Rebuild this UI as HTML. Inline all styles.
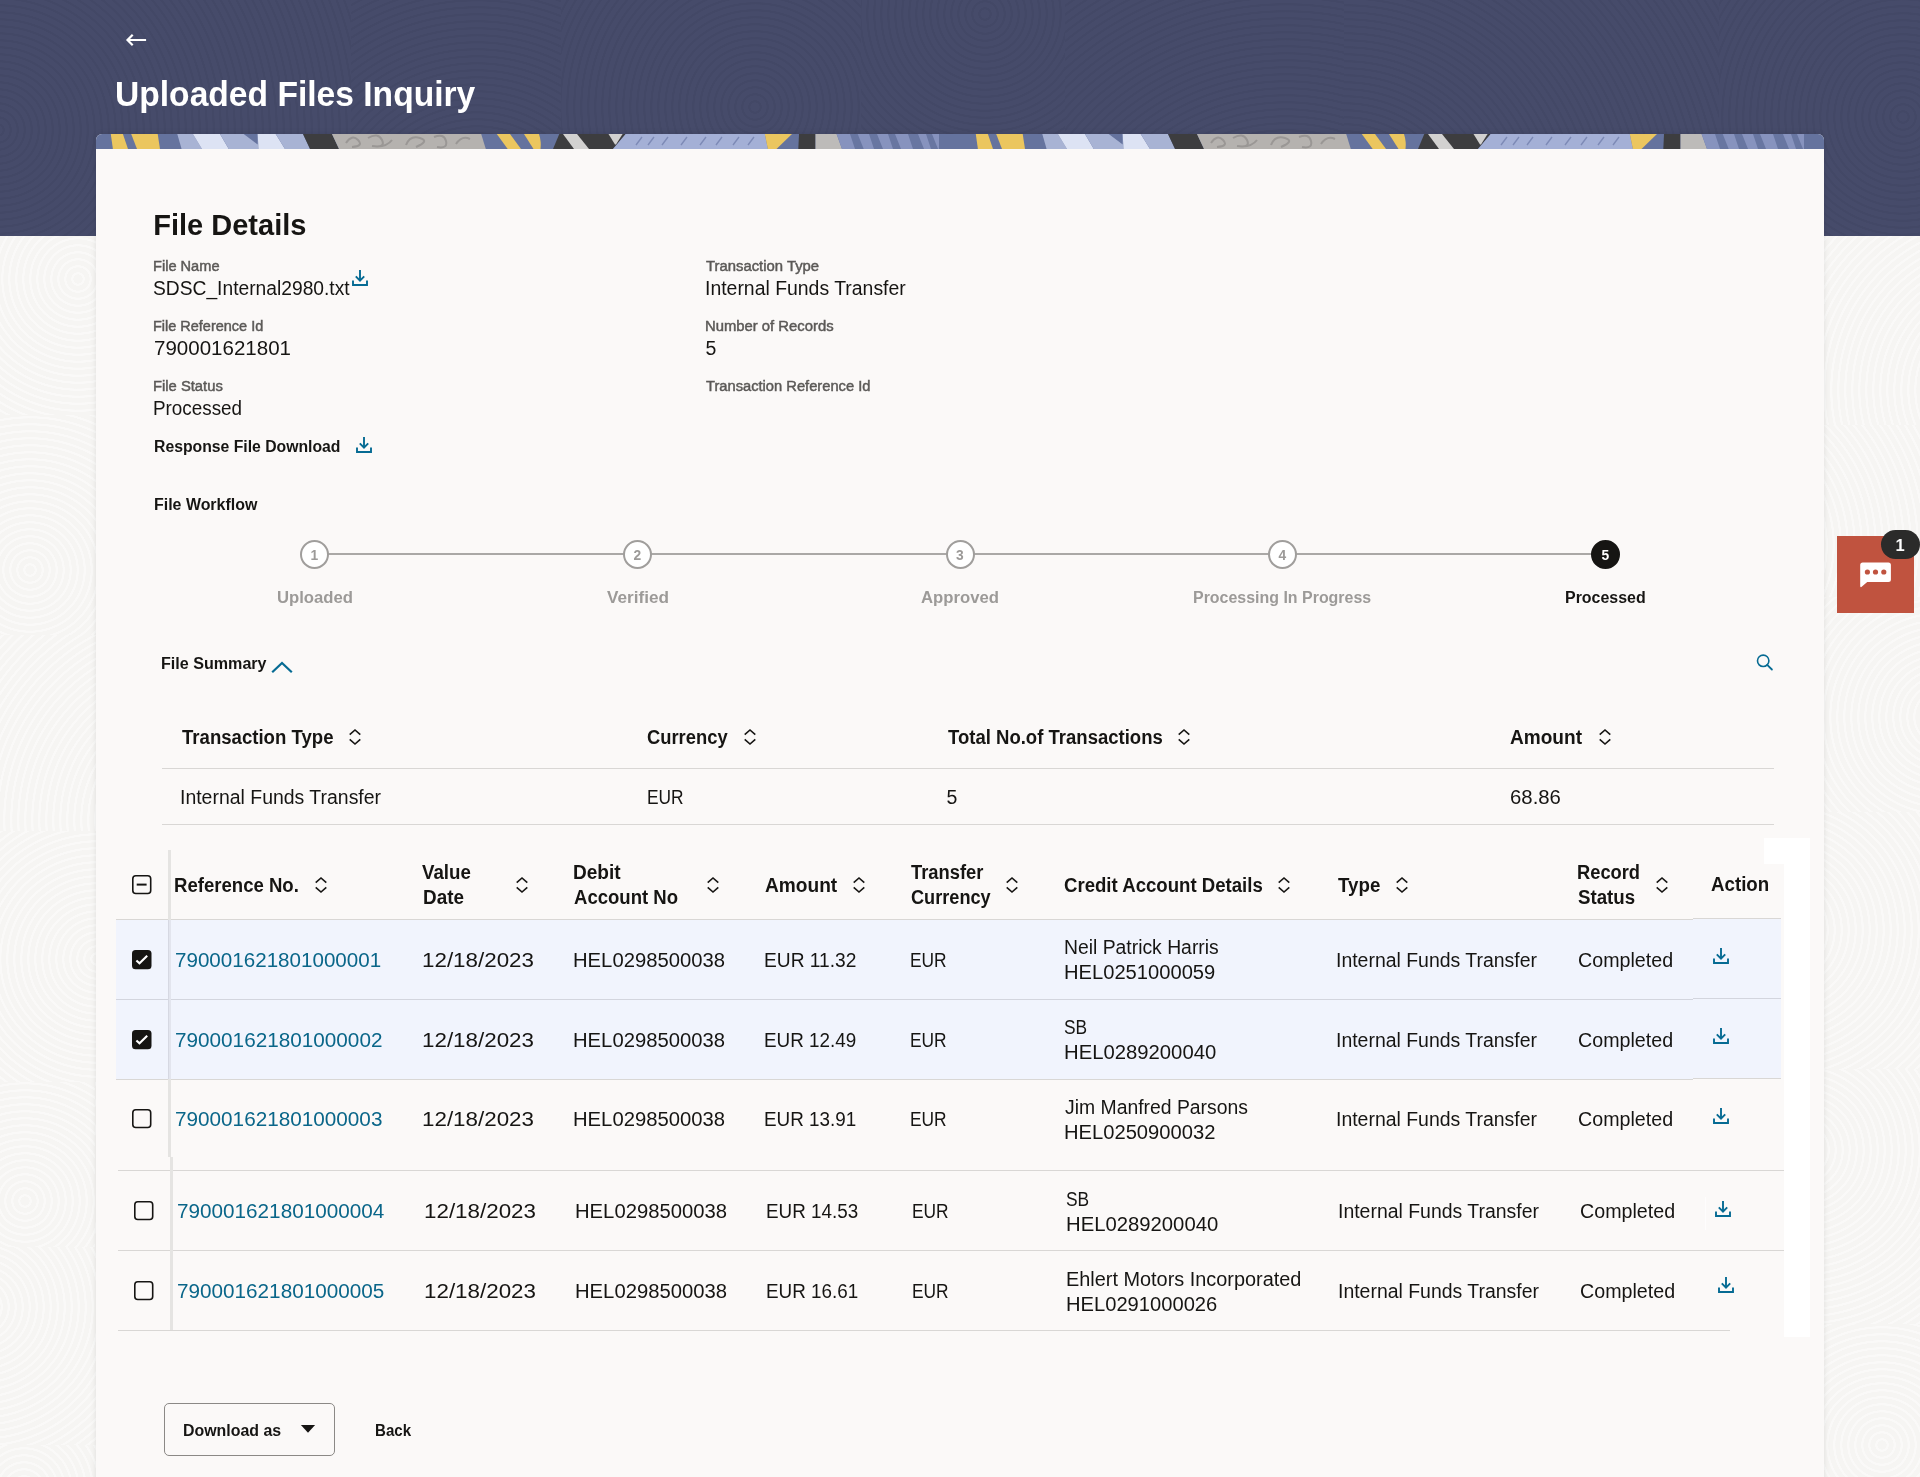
<!DOCTYPE html>
<html lang="en">
<head>
<meta charset="utf-8">
<title>Uploaded Files Inquiry</title>
<style>
*{box-sizing:border-box}
html,body{margin:0;padding:0}
body{width:1920px;height:1477px;overflow:hidden;position:relative;background:#f6f5f3;
  font-family:"Liberation Sans",sans-serif;color:#161513;}
.hdr{position:absolute;left:0;top:0;width:1920px;height:236px;background:#464b6a;overflow:hidden}
.card{position:absolute;left:96px;top:134px;width:1728px;height:1400px;background:#fbf9f8;
  border-radius:6px 6px 0 0;box-shadow:0 0 6px rgba(0,0,0,.10);overflow:hidden}
.banner{position:absolute;left:0;top:0;display:block}
.t{position:absolute;white-space:pre;margin:0;transform-origin:0 0}
#page{position:absolute;left:0;top:0;width:1920px;height:1477px;overflow:hidden;will-change:transform}
.ic{position:absolute;overflow:visible}
.ln{position:absolute;background:#d9d7d5;height:1px}
.abs{position:absolute}
.tx{position:absolute;display:block}
.cb{position:absolute;width:19px;height:19px;border:1.8px solid #161513;border-radius:3.5px}
.cb.on{background:#161513}
.cb.on svg{position:absolute;left:-1.8px;top:-1.8px}
.cb .minus{position:absolute;left:2.9px;top:6.7px;width:9.8px;height:2px;background:#161513}
.step{position:absolute;width:29px;height:29px;border-radius:50%;border:2px solid #a09e9c;background:#fff}
.step.cur{background:#161513;border-color:#161513}
.btn{position:absolute;left:164px;top:1403px;width:171px;height:53px;border:1px solid #8b8986;border-radius:5px}
</style>
</head>
<body>
<div id="page">
<svg width="0" height="0" style="position:absolute">
 <defs>
  <g id="dl" fill="none" stroke="#066b93" stroke-width="1.9">
    <path d="M1 10.4 V15 H15 V10.4"/><path d="M8 0 V10.6"/><path d="M3.8 6.3 L8 10.6 L12.2 6.3"/>
  </g>
  <g id="srt" fill="none" stroke="#161513" stroke-width="1.6">
    <path d="M-5.3 -2.3 L0 -7 L5.3 -2.3"/><path d="M-5.3 2.3 L0 7 L5.3 2.3"/>
  </g>
 </defs>
</svg>

<div class="abs" style="left:0;top:236px;width:96px;height:1241px;overflow:hidden"><i class="tx" style="left:-14px;top:0px;width:177px;height:179px;background:repeating-radial-gradient(circle at 92px 43px,transparent 0 4.4px,rgba(255,255,255,.45) 4.8px 6.6px,transparent 7px)"></i><i class="tx" style="left:-78px;top:179px;width:311px;height:220px;background:repeating-radial-gradient(circle at 108px 155px,transparent 0 4.4px,rgba(255,255,255,.45) 4.8px 6.6px,transparent 7px)"></i><i class="tx" style="left:-9px;top:399px;width:266px;height:196px;background:repeating-radial-gradient(circle at 201px 185px,transparent 0 4.4px,rgba(255,255,255,.45) 4.8px 6.6px,transparent 7px)"></i><i class="tx" style="left:-130px;top:595px;width:295px;height:251px;background:repeating-radial-gradient(circle at 227px 128px,transparent 0 4.4px,rgba(255,255,255,.45) 4.8px 6.6px,transparent 7px)"></i><i class="tx" style="left:-68px;top:846px;width:163px;height:165px;background:repeating-radial-gradient(circle at 93px 119px,transparent 0 4.4px,rgba(255,255,255,.45) 4.8px 6.6px,transparent 7px)"></i><i class="tx" style="left:95px;top:846px;width:237px;height:165px;background:repeating-radial-gradient(circle at 232px 97px,transparent 0 4.4px,rgba(255,255,255,.45) 4.8px 6.6px,transparent 7px)"></i><i class="tx" style="left:-108px;top:1011px;width:299px;height:198px;background:repeating-radial-gradient(circle at 90px 60px,transparent 0 4.4px,rgba(255,255,255,.45) 4.8px 6.6px,transparent 7px)"></i><i class="tx" style="left:-59px;top:1209px;width:201px;height:162px;background:repeating-radial-gradient(circle at 83px 44px,transparent 0 4.4px,rgba(255,255,255,.45) 4.8px 6.6px,transparent 7px)"></i></div>
<div class="abs" style="left:1824px;top:236px;width:96px;height:1241px;overflow:hidden"><i class="tx" style="left:-60px;top:0px;width:250px;height:189px;background:repeating-radial-gradient(circle at 234px 154px,transparent 0 4.4px,rgba(255,255,255,.45) 4.8px 6.6px,transparent 7px)"></i><i class="tx" style="left:-121px;top:189px;width:311px;height:172px;background:repeating-radial-gradient(circle at 6px 120px,transparent 0 4.4px,rgba(255,255,255,.45) 4.8px 6.6px,transparent 7px)"></i><i class="tx" style="left:-66px;top:361px;width:205px;height:215px;background:repeating-radial-gradient(circle at 183px 120px,transparent 0 4.4px,rgba(255,255,255,.45) 4.8px 6.6px,transparent 7px)"></i><i class="tx" style="left:-121px;top:576px;width:319px;height:257px;background:repeating-radial-gradient(circle at 77px 118px,transparent 0 4.4px,rgba(255,255,255,.45) 4.8px 6.6px,transparent 7px)"></i><i class="tx" style="left:-38px;top:833px;width:159px;height:255px;background:repeating-radial-gradient(circle at 16px 81px,transparent 0 4.4px,rgba(255,255,255,.45) 4.8px 6.6px,transparent 7px)"></i><i class="tx" style="left:-10px;top:1088px;width:163px;height:233px;background:repeating-radial-gradient(circle at 68px 121px,transparent 0 4.4px,rgba(255,255,255,.45) 4.8px 6.6px,transparent 7px)"></i></div>
<header class="hdr">
<i class="tx" style="left:-34px;top:0px;width:385px;height:325px;background:repeating-radial-gradient(circle at 32px 130px,transparent 0 4.4px,rgba(0,0,20,.045) 4.8px 6.6px,transparent 7px)"></i><i class="tx" style="left:351px;top:0px;width:210px;height:325px;background:repeating-radial-gradient(circle at 126px 230px,transparent 0 4.4px,rgba(0,0,20,.045) 4.8px 6.6px,transparent 7px)"></i><i class="tx" style="left:561px;top:0px;width:300px;height:325px;background:repeating-radial-gradient(circle at 194px 107px,transparent 0 4.4px,rgba(0,0,20,.045) 4.8px 6.6px,transparent 7px)"></i><i class="tx" style="left:861px;top:0px;width:204px;height:325px;background:repeating-radial-gradient(circle at 124px 14px,transparent 0 4.4px,rgba(0,0,20,.045) 4.8px 6.6px,transparent 7px)"></i><i class="tx" style="left:1065px;top:0px;width:279px;height:325px;background:repeating-radial-gradient(circle at 221px 311px,transparent 0 4.4px,rgba(0,0,20,.045) 4.8px 6.6px,transparent 7px)"></i><i class="tx" style="left:1344px;top:0px;width:375px;height:325px;background:repeating-radial-gradient(circle at 1px 228px,transparent 0 4.4px,rgba(0,0,20,.045) 4.8px 6.6px,transparent 7px)"></i><i class="tx" style="left:1719px;top:0px;width:248px;height:325px;background:repeating-radial-gradient(circle at 184px 117px,transparent 0 4.4px,rgba(0,0,20,.045) 4.8px 6.6px,transparent 7px)"></i>
  <svg class="ic" style="left:125px;top:32.1px" width="22" height="16" viewBox="0 0 22 16"><path d="M21.1 8 H2.6 M7.7 2.7 L2.5 8 L7.7 13.3" fill="none" stroke="#fff" stroke-width="2.2"/></svg>
</header>
<div class="t" style="left:115.33px;top:74.80px;font-size:34.4px;line-height:38px;transform:scaleX(0.9769);font-weight:700;color:#ffffff;">Uploaded Files Inquiry</div>

<main class="card"><svg class="banner" width="1728" height="15" viewBox="0 0 1728 15"><defs><g id="bp"><rect x="0" y="0" width="865" height="15" fill="#65739e"/><polygon points="14.8,0 26.9,0 32,15 16.9,15" fill="#ebc65f"/><polygon points="35.2,0 61.7,0 64,15 41,15" fill="#ebc65f"/><polygon points="81.3,0 96.9,0 106,15 85.6,15" fill="#a8b3d4"/><polygon points="96.9,0 124,0 132.8,15 106,15" fill="#dde3f4"/><polygon points="124,0 161.7,0 162.5,15 132.8,15" fill="#a8b3d4"/><polygon points="147.7,0 161.7,0 161.7,10.5" fill="#65739e"/><polygon points="161.7,0 179.7,0 189,15 162.5,15" fill="#dde3f4"/><polygon points="179.7,0 207,0 214,15 189,15" fill="#a8b3d4"/><polygon points="207,0 236,0 243,15 214,15" fill="#3d3d3f"/><polygon points="236,0 385.2,0 389.8,15 243,15" fill="#b5b2af"/><path d="M250 9 q6 -9 12 -3 t-6 7 M272 4 q10 -6 14 2 t-10 6 q14 2 20 -6 M310 11 q4 -10 14 -7 t-4 9 M338 3 q10 -4 12 4 t-9 6 M360 10 q6 -9 14 -5" fill="none" stroke="#9a9795" stroke-width="2"/><polygon points="400.8,0 414,0 425,15 411.7,15" fill="#ebc65f"/><path d="M428 0 H443 Q445.5 8 444.5 15 H437.5 Z" fill="#ebc65f"/><polygon points="463.3,0 529.7,0 517,15 457,15" fill="#3d3d3f"/><polygon points="467,0 481,0 493,15 478,15" fill="#d2d1d0"/><polygon points="512.5,0 526.6,0 520,10.5 519,10.5" fill="#d2d1d0"/><polygon points="529.7,0 668.8,0 671.9,15 517,15" fill="#a4b0d6"/><path d="M540 11 l6 -8 M552 11 l6 -8 M566 11 l6 -8 M585 11 l6 -8 M604 11 l6 -8 M620 11 l6 -8 M637 11 l6 -8 M652 11 l6 -8" fill="none" stroke="#7d8ab6" stroke-width="1.4"/><polygon points="668.8,0 696,0 680.5,15 671.9,15" fill="#ebc65f"/><polygon points="703,0 719.5,0 719.5,15 702.3,15" fill="#3d3d3f"/><polygon points="719.5,0 740.6,0 746,15 719.5,15" fill="#bdbbb9"/><polygon points="740.6,0 843,0 843,15 746,15" fill="#8793be"/><polygon points="754,0 761.7,0 767.7,15 759,15" fill="#6876a1"/><polygon points="773,0 781,0 787,15 778,15" fill="#6876a1"/><polygon points="792,0 799,0 805,15 797,15" fill="#6876a1"/><polygon points="812,0 822,0 828,15 817,15" fill="#6876a1"/><polygon points="830,0 836,0 842,15 835,15" fill="#6876a1"/></g></defs><use href="#bp" x="0"/><use href="#bp" x="865"/></svg></main>

<section>
<div class="t" style="left:153.27px;top:208.80px;font-size:29px;line-height:32px;font-weight:700;">File Details</div>
<div class="t" style="left:153.18px;top:257.80px;font-size:14px;line-height:16px;transform:scaleX(1.0427);-webkit-text-stroke:0.45px;color:#5b5957;">File Name</div>
<div class="t" style="left:152.99px;top:276.70px;font-size:19.5px;line-height:22px;transform:scaleX(0.9860);">SDSC_Internal2980.txt</div>
<div class="t" style="left:153.20px;top:317.80px;font-size:14px;line-height:16px;transform:scaleX(1.0339);-webkit-text-stroke:0.45px;color:#5b5957;">File Reference Id</div>
<div class="t" style="left:154.02px;top:336.50px;font-size:19.5px;line-height:22px;transform:scaleX(1.0526);">790001621801</div>
<div class="t" style="left:153.17px;top:377.80px;font-size:14px;line-height:16px;transform:scaleX(1.0548);-webkit-text-stroke:0.45px;color:#5b5957;">File Status</div>
<div class="t" style="left:153.12px;top:396.70px;font-size:19.5px;line-height:22px;transform:scaleX(0.9670);">Processed</div>
<div class="t" style="left:706.02px;top:257.80px;font-size:14px;line-height:16px;transform:scaleX(1.0610);-webkit-text-stroke:0.45px;color:#5b5957;">Transaction Type</div>
<div class="t" style="left:704.91px;top:276.70px;font-size:19.5px;line-height:22px;transform:scaleX(0.9958);">Internal Funds Transfer</div>
<div class="t" style="left:705.10px;top:317.80px;font-size:14px;line-height:16px;transform:scaleX(1.0592);-webkit-text-stroke:0.45px;color:#5b5957;">Number of Records</div>
<div class="t" style="left:705.53px;top:336.50px;font-size:19.5px;line-height:22px;">5</div>
<div class="t" style="left:706.02px;top:377.80px;font-size:14px;line-height:16px;transform:scaleX(1.0493);-webkit-text-stroke:0.45px;color:#5b5957;">Transaction Reference Id</div>
<div class="t" style="left:154.08px;top:437.70px;font-size:16px;line-height:17px;transform:scaleX(0.9849);font-weight:700;">Response File Download</div>
<div class="t" style="left:154.07px;top:496.00px;font-size:16px;line-height:17px;transform:scaleX(0.9960);font-weight:700;">File Workflow</div>
<svg class="ic" style="left:352px;top:269.6px" width="16" height="16" viewBox="0 0 16 16"><use href="#dl"/></svg>
<svg class="ic" style="left:356px;top:437.4px" width="16" height="16" viewBox="0 0 16 16"><use href="#dl"/></svg>
</section>

<section class="workflow">
<div class="abs" style="left:314px;top:553px;width:1291px;height:2px;background:#aaa8a6"></div>
<span class="step" style="left:300px;top:540px"></span>
<span class="step" style="left:622.8px;top:540px"></span>
<span class="step" style="left:945.5px;top:540px"></span>
<span class="step" style="left:1268px;top:540px"></span>
<span class="step cur" style="left:1590.8px;top:540px"></span>
<div class="t" style="left:276.90px;top:587.80px;font-size:16.8px;line-height:19px;transform:scaleX(0.9937);font-weight:700;color:#9c9a98;">Uploaded</div>
<div class="t" style="left:606.80px;top:587.80px;font-size:16.8px;line-height:19px;transform:scaleX(1.0228);font-weight:700;color:#9c9a98;">Verified</div>
<div class="t" style="left:921.14px;top:587.80px;font-size:16.8px;line-height:19px;transform:scaleX(0.9952);font-weight:700;color:#9c9a98;">Approved</div>
<div class="t" style="left:1193.31px;top:587.80px;font-size:16.8px;line-height:19px;transform:scaleX(0.9505);font-weight:700;color:#9c9a98;">Processing In Progress</div>
<div class="t" style="left:1564.52px;top:587.80px;font-size:16.8px;line-height:19px;transform:scaleX(0.9504);font-weight:700;">Processed</div>
<div class="t" style="left:310.41px;top:547.90px;font-size:13.8px;line-height:15px;font-weight:700;color:#9c9a98;">1</div>
<div class="t" style="left:633.56px;top:547.90px;font-size:13.8px;line-height:15px;font-weight:700;color:#9c9a98;">2</div>
<div class="t" style="left:956.07px;top:547.90px;font-size:13.8px;line-height:15px;font-weight:700;color:#9c9a98;">3</div>
<div class="t" style="left:1278.56px;top:547.90px;font-size:13.8px;line-height:15px;font-weight:700;color:#9c9a98;">4</div>
<div class="t" style="left:1601.38px;top:547.90px;font-size:13.8px;line-height:15px;font-weight:700;color:#ffffff;">5</div>
</section>

<section class="summary">
<div class="t" style="left:161.05px;top:654.70px;font-size:16px;line-height:17px;transform:scaleX(1.0058);font-weight:700;">File Summary</div>
<div class="t" style="left:181.80px;top:726.00px;font-size:19.5px;line-height:22px;transform:scaleX(0.9532);font-weight:700;">Transaction Type</div>
<div class="t" style="left:646.51px;top:726.00px;font-size:19.5px;line-height:22px;transform:scaleX(0.9413);font-weight:700;">Currency</div>
<div class="t" style="left:947.80px;top:726.00px;font-size:19.5px;line-height:22px;transform:scaleX(0.9501);font-weight:700;">Total No.of Transactions</div>
<div class="t" style="left:1510.02px;top:726.00px;font-size:19.5px;line-height:22px;transform:scaleX(0.9774);font-weight:700;">Amount</div>
<div class="t" style="left:179.70px;top:786.00px;font-size:19.5px;line-height:22px;transform:scaleX(0.9973);">Internal Funds Transfer</div>
<div class="t" style="left:647.35px;top:786.00px;font-size:19.5px;line-height:22px;transform:scaleX(0.8900);">EUR</div>
<div class="t" style="left:946.59px;top:786.00px;font-size:19.5px;line-height:22px;">5</div>
<div class="t" style="left:1510.27px;top:786.00px;font-size:19.5px;line-height:22px;transform:scaleX(1.0432);">68.86</div>
<svg class="ic" style="left:270.6px;top:660px" width="22" height="14" viewBox="0 0 22 14"><path d="M1.2 12.3 L11 2.9 L20.8 12.3" fill="none" stroke="#066b93" stroke-width="2.2"/></svg>
<svg class="ic" style="left:1756px;top:654px" width="18" height="18" viewBox="0 0 18 18"><circle cx="7.2" cy="6.8" r="5.7" fill="none" stroke="#066b93" stroke-width="1.6"/><path d="M11.2 10.8 L15.9 15.5" stroke="#066b93" stroke-width="1.8" stroke-linecap="round"/></svg>
<svg class="ic" style="left:346.6px;top:727.9px" width="16" height="18" viewBox="-8 -9 16 18"><use href="#srt"/></svg><svg class="ic" style="left:741.5px;top:727.9px" width="16" height="18" viewBox="-8 -9 16 18"><use href="#srt"/></svg><svg class="ic" style="left:1176.3px;top:727.9px" width="16" height="18" viewBox="-8 -9 16 18"><use href="#srt"/></svg><svg class="ic" style="left:1596.7px;top:727.9px" width="16" height="18" viewBox="-8 -9 16 18"><use href="#srt"/></svg>
<div class="ln" style="left:162px;top:768px;width:1612px"></div>
<div class="ln" style="left:162px;top:824px;width:1612px"></div>
</section>

<section class="details">
<div class="abs" style="left:1764px;top:838px;width:46px;height:26px;background:#fff"></div>
<div class="abs" style="left:1784px;top:838px;width:26px;height:499px;background:#fff"></div>
<div class="abs" style="left:116px;top:920px;width:1665px;height:159px;background:#f1f4fd"></div>
<div class="abs" style="left:1693px;top:919px;width:88px;height:159px;background:#f1f4fd"></div>
<div class="ln" style="left:116px;top:919px;width:1577px"></div>
<div class="ln" style="left:1693px;top:918px;width:88px"></div>
<div class="ln" style="left:116px;top:999px;width:1577px;background:#d3d5de"></div>
<div class="ln" style="left:1693px;top:998px;width:88px;background:#d3d5de"></div>
<div class="ln" style="left:116px;top:1079px;width:1577px"></div>
<div class="ln" style="left:1693px;top:1078px;width:88px"></div>
<div class="ln" style="left:118px;top:1170px;width:1666px"></div>
<div class="ln" style="left:118px;top:1250px;width:1666px"></div>
<div class="ln" style="left:118px;top:1330px;width:1612px"></div>
<div class="abs" style="left:168px;top:850px;width:3px;height:307px;background:#e5e4e2"></div>
<div class="abs" style="left:168px;top:920px;width:3px;height:159px;background:#e3e5ee"></div>
<div class="abs" style="left:168px;top:920px;width:1px;height:159px;background:#d6d8e2"></div>
<div class="abs" style="left:170.2px;top:1157px;width:2.8px;height:173px;background:#e5e4e2"></div>
<div class="abs" style="left:1705px;top:1197px;width:1px;height:33px;background:#fff;opacity:.7"></div>
<svg class="ic" style="left:132.3px;top:875.1px" width="20" height="20" viewBox="0 0 20 20"><rect x="0.8" y="0.8" width="17.9" height="17.7" rx="3" fill="none" stroke="#161513" stroke-width="1.6"/><path d="M4.7 9.6 H14.6" stroke="#161513" stroke-width="2"/></svg>
<svg class="ic" style="left:132.3px;top:950.2px" width="20" height="20" viewBox="0 0 20 20"><rect x="0" y="0" width="19.5" height="19.3" rx="3.6" fill="#161513"/><path d="M4.4 10.4 L7.5 13.3 L15.2 5.7" fill="none" stroke="#fff" stroke-width="2.1"/></svg>
<svg class="ic" style="left:132.3px;top:1030.2px" width="20" height="20" viewBox="0 0 20 20"><rect x="0" y="0" width="19.5" height="19.3" rx="3.6" fill="#161513"/><path d="M4.4 10.4 L7.5 13.3 L15.2 5.7" fill="none" stroke="#fff" stroke-width="2.1"/></svg>
<svg class="ic" style="left:132.3px;top:1109.2px" width="20" height="20" viewBox="0 0 20 20"><rect x="0.8" y="0.8" width="17.9" height="17.7" rx="3" fill="none" stroke="#161513" stroke-width="1.6"/></svg>
<svg class="ic" style="left:134.3px;top:1201.1px" width="20" height="20" viewBox="0 0 20 20"><rect x="0.8" y="0.8" width="17.9" height="17.7" rx="3" fill="none" stroke="#161513" stroke-width="1.6"/></svg>
<svg class="ic" style="left:134.3px;top:1281.1px" width="20" height="20" viewBox="0 0 20 20"><rect x="0.8" y="0.8" width="17.9" height="17.7" rx="3" fill="none" stroke="#161513" stroke-width="1.6"/></svg>
<svg class="ic" style="left:312.5px;top:876.0px" width="16" height="18" viewBox="-8 -9 16 18"><use href="#srt"/></svg><svg class="ic" style="left:514.2px;top:876.0px" width="16" height="18" viewBox="-8 -9 16 18"><use href="#srt"/></svg><svg class="ic" style="left:704.7px;top:876.0px" width="16" height="18" viewBox="-8 -9 16 18"><use href="#srt"/></svg><svg class="ic" style="left:850.8px;top:876.0px" width="16" height="18" viewBox="-8 -9 16 18"><use href="#srt"/></svg><svg class="ic" style="left:1004.2px;top:876.0px" width="16" height="18" viewBox="-8 -9 16 18"><use href="#srt"/></svg><svg class="ic" style="left:1275.8px;top:876.0px" width="16" height="18" viewBox="-8 -9 16 18"><use href="#srt"/></svg><svg class="ic" style="left:1394.2px;top:876.0px" width="16" height="18" viewBox="-8 -9 16 18"><use href="#srt"/></svg><svg class="ic" style="left:1653.7px;top:876.0px" width="16" height="18" viewBox="-8 -9 16 18"><use href="#srt"/></svg>
<div class="t" style="left:174.36px;top:874.30px;font-size:19.5px;line-height:22px;transform:scaleX(0.9521);font-weight:700;">Reference No.</div>
<div class="t" style="left:422.40px;top:861.00px;font-size:19.5px;line-height:22px;transform:scaleX(0.9593);font-weight:700;">Value</div>
<div class="t" style="left:422.55px;top:886.00px;font-size:19.5px;line-height:22px;transform:scaleX(0.9690);font-weight:700;">Date</div>
<div class="t" style="left:573.14px;top:861.00px;font-size:19.5px;line-height:22px;transform:scaleX(0.9775);font-weight:700;">Debit</div>
<div class="t" style="left:573.87px;top:886.00px;font-size:19.5px;line-height:22px;transform:scaleX(0.9508);font-weight:700;">Account No</div>
<div class="t" style="left:764.62px;top:873.90px;font-size:19.5px;line-height:22px;transform:scaleX(0.9805);font-weight:700;">Amount</div>
<div class="t" style="left:911.00px;top:861.30px;font-size:19.5px;line-height:22px;transform:scaleX(0.9414);font-weight:700;">Transfer</div>
<div class="t" style="left:910.72px;top:886.30px;font-size:19.5px;line-height:22px;transform:scaleX(0.9308);font-weight:700;">Currency</div>
<div class="t" style="left:1063.90px;top:874.30px;font-size:19.5px;line-height:22px;transform:scaleX(0.9537);font-weight:700;">Credit Account Details</div>
<div class="t" style="left:1338.20px;top:874.30px;font-size:19.5px;line-height:22px;transform:scaleX(0.9600);font-weight:700;">Type</div>
<div class="t" style="left:1577.38px;top:861.30px;font-size:19.5px;line-height:22px;transform:scaleX(0.9380);font-weight:700;">Record</div>
<div class="t" style="left:1578.05px;top:886.30px;font-size:19.5px;line-height:22px;transform:scaleX(0.9581);font-weight:700;">Status</div>
<div class="t" style="left:1710.83px;top:872.80px;font-size:19.5px;line-height:22px;transform:scaleX(0.9594);font-weight:700;">Action</div>
<div class="t" style="left:174.60px;top:948.80px;font-size:19.5px;line-height:22px;transform:scaleX(1.0561);color:#0a6689;">790001621801000001</div>
<div class="t" style="left:421.52px;top:948.80px;font-size:19.5px;line-height:22px;transform:scaleX(1.1472);">12/18/2023</div>
<div class="t" style="left:572.78px;top:948.80px;font-size:19.5px;line-height:22px;transform:scaleX(1.0381);">HEL0298500038</div>
<div class="t" style="left:764.06px;top:948.80px;font-size:19.5px;line-height:22px;transform:scaleX(0.9830);">EUR 11.32</div>
<div class="t" style="left:910.35px;top:948.80px;font-size:19.5px;line-height:22px;transform:scaleX(0.8900);">EUR</div>
<div class="t" style="left:1064.00px;top:936.00px;font-size:19.5px;line-height:22px;transform:scaleX(0.9917);">Neil Patrick Harris</div>
<div class="t" style="left:1063.78px;top:960.80px;font-size:19.5px;line-height:22px;transform:scaleX(1.0335);">HEL0251000059</div>
<div class="t" style="left:1336.31px;top:948.80px;font-size:19.5px;line-height:22px;transform:scaleX(0.9966);">Internal Funds Transfer</div>
<div class="t" style="left:1577.88px;top:948.80px;font-size:19.5px;line-height:22px;transform:scaleX(1.0083);">Completed</div>
<div class="t" style="left:174.59px;top:1028.80px;font-size:19.5px;line-height:22px;transform:scaleX(1.0627);color:#0a6689;">790001621801000002</div>
<div class="t" style="left:421.52px;top:1028.80px;font-size:19.5px;line-height:22px;transform:scaleX(1.1472);">12/18/2023</div>
<div class="t" style="left:572.78px;top:1028.80px;font-size:19.5px;line-height:22px;transform:scaleX(1.0381);">HEL0298500038</div>
<div class="t" style="left:764.11px;top:1028.80px;font-size:19.5px;line-height:22px;transform:scaleX(0.9670);">EUR 12.49</div>
<div class="t" style="left:910.35px;top:1028.80px;font-size:19.5px;line-height:22px;transform:scaleX(0.8900);">EUR</div>
<div class="t" style="left:1064.06px;top:1016.00px;font-size:19.5px;line-height:22px;transform:scaleX(0.8892);">SB</div>
<div class="t" style="left:1063.79px;top:1040.80px;font-size:19.5px;line-height:22px;transform:scaleX(1.0398);">HEL0289200040</div>
<div class="t" style="left:1336.31px;top:1028.80px;font-size:19.5px;line-height:22px;transform:scaleX(0.9966);">Internal Funds Transfer</div>
<div class="t" style="left:1577.88px;top:1028.80px;font-size:19.5px;line-height:22px;transform:scaleX(1.0083);">Completed</div>
<div class="t" style="left:174.59px;top:1108.20px;font-size:19.5px;line-height:22px;transform:scaleX(1.0625);color:#0a6689;">790001621801000003</div>
<div class="t" style="left:421.52px;top:1108.20px;font-size:19.5px;line-height:22px;transform:scaleX(1.1472);">12/18/2023</div>
<div class="t" style="left:572.78px;top:1108.20px;font-size:19.5px;line-height:22px;transform:scaleX(1.0381);">HEL0298500038</div>
<div class="t" style="left:764.11px;top:1108.20px;font-size:19.5px;line-height:22px;transform:scaleX(0.9672);">EUR 13.91</div>
<div class="t" style="left:910.35px;top:1108.20px;font-size:19.5px;line-height:22px;transform:scaleX(0.8900);">EUR</div>
<div class="t" style="left:1065.07px;top:1095.80px;font-size:19.5px;line-height:22px;transform:scaleX(0.9931);">Jim Manfred Parsons</div>
<div class="t" style="left:1063.78px;top:1120.80px;font-size:19.5px;line-height:22px;transform:scaleX(1.0339);">HEL0250900032</div>
<div class="t" style="left:1336.31px;top:1108.20px;font-size:19.5px;line-height:22px;transform:scaleX(0.9966);">Internal Funds Transfer</div>
<div class="t" style="left:1577.88px;top:1108.20px;font-size:19.5px;line-height:22px;transform:scaleX(1.0083);">Completed</div>
<div class="t" style="left:176.80px;top:1199.90px;font-size:19.5px;line-height:22px;transform:scaleX(1.0618);color:#0a6689;">790001621801000004</div>
<div class="t" style="left:423.52px;top:1199.90px;font-size:19.5px;line-height:22px;transform:scaleX(1.1472);">12/18/2023</div>
<div class="t" style="left:574.78px;top:1199.90px;font-size:19.5px;line-height:22px;transform:scaleX(1.0381);">HEL0298500038</div>
<div class="t" style="left:766.11px;top:1199.90px;font-size:19.5px;line-height:22px;transform:scaleX(0.9663);">EUR 14.53</div>
<div class="t" style="left:912.35px;top:1199.90px;font-size:19.5px;line-height:22px;transform:scaleX(0.8900);">EUR</div>
<div class="t" style="left:1065.86px;top:1187.70px;font-size:19.5px;line-height:22px;transform:scaleX(0.8892);">SB</div>
<div class="t" style="left:1065.59px;top:1213.00px;font-size:19.5px;line-height:22px;transform:scaleX(1.0398);">HEL0289200040</div>
<div class="t" style="left:1338.31px;top:1199.90px;font-size:19.5px;line-height:22px;transform:scaleX(0.9966);">Internal Funds Transfer</div>
<div class="t" style="left:1579.88px;top:1199.90px;font-size:19.5px;line-height:22px;transform:scaleX(1.0083);">Completed</div>
<div class="t" style="left:176.81px;top:1279.90px;font-size:19.5px;line-height:22px;transform:scaleX(1.0618);color:#0a6689;">790001621801000005</div>
<div class="t" style="left:423.52px;top:1279.90px;font-size:19.5px;line-height:22px;transform:scaleX(1.1472);">12/18/2023</div>
<div class="t" style="left:574.78px;top:1279.90px;font-size:19.5px;line-height:22px;transform:scaleX(1.0381);">HEL0298500038</div>
<div class="t" style="left:766.11px;top:1279.90px;font-size:19.5px;line-height:22px;transform:scaleX(0.9672);">EUR 16.61</div>
<div class="t" style="left:912.35px;top:1279.90px;font-size:19.5px;line-height:22px;transform:scaleX(0.8900);">EUR</div>
<div class="t" style="left:1065.65px;top:1267.60px;font-size:19.5px;line-height:22px;transform:scaleX(1.0195);">Ehlert Motors Incorporated</div>
<div class="t" style="left:1065.58px;top:1293.10px;font-size:19.5px;line-height:22px;transform:scaleX(1.0334);">HEL0291000026</div>
<div class="t" style="left:1338.31px;top:1279.90px;font-size:19.5px;line-height:22px;transform:scaleX(0.9966);">Internal Funds Transfer</div>
<div class="t" style="left:1579.88px;top:1279.90px;font-size:19.5px;line-height:22px;transform:scaleX(1.0083);">Completed</div>
<svg class="ic" style="left:1712.9px;top:948.4px" width="16" height="16" viewBox="0 0 16 16"><use href="#dl"/></svg>
<svg class="ic" style="left:1712.9px;top:1028.4px" width="16" height="16" viewBox="0 0 16 16"><use href="#dl"/></svg>
<svg class="ic" style="left:1712.9px;top:1107.8px" width="16" height="16" viewBox="0 0 16 16"><use href="#dl"/></svg>
<svg class="ic" style="left:1714.9px;top:1201.2px" width="16" height="16" viewBox="0 0 16 16"><use href="#dl"/></svg>
<svg class="ic" style="left:1718.4px;top:1277.4px" width="16" height="16" viewBox="0 0 16 16"><use href="#dl"/></svg>
</section>

<section class="actions">
<div class="btn"></div>
<svg class="ic" style="left:299.9px;top:1424.2px" width="16" height="10" viewBox="0 0 16 10"><path d="M0.9 0.9 H15.1 L8 8.7 Z" fill="#161513"/></svg>
<div class="t" style="left:183.47px;top:1421.90px;font-size:16px;line-height:17px;transform:scaleX(0.9941);font-weight:700;">Download as</div>
<div class="t" style="left:375.34px;top:1421.90px;font-size:16px;line-height:17px;transform:scaleX(0.9418);font-weight:700;">Back</div>
</section>

<aside class="chat">
<div class="abs" style="left:1837px;top:536px;width:77px;height:77px;background:#c0533f"></div>
<svg class="ic" style="left:1860px;top:562px" width="32" height="26" viewBox="0 0 32 26"><path d="M2.7 0.6 H28.4 a2.5 2.5 0 0 1 2.5 2.5 V17.5 a2.5 2.5 0 0 1 -2.5 2.5 H7.2 L1.4 25 Q0.2 25.6 0.2 24 V3.1 a2.5 2.5 0 0 1 2.5 -2.5 Z" fill="#fff"/><circle cx="7.4" cy="10" r="2.6" fill="#c0533f"/><circle cx="15.5" cy="10" r="2.6" fill="#c0533f"/><circle cx="23.8" cy="10" r="2.6" fill="#c0533f"/></svg>
<div class="abs" style="left:1881px;top:530px;width:38.6px;height:29px;border-radius:14.5px;background:#2b2b2a"></div>
<div class="t" style="left:1895.55px;top:536.20px;font-size:16.5px;line-height:18px;font-weight:700;color:#ffffff;">1</div>
</aside>
</div>
</body>
</html>
